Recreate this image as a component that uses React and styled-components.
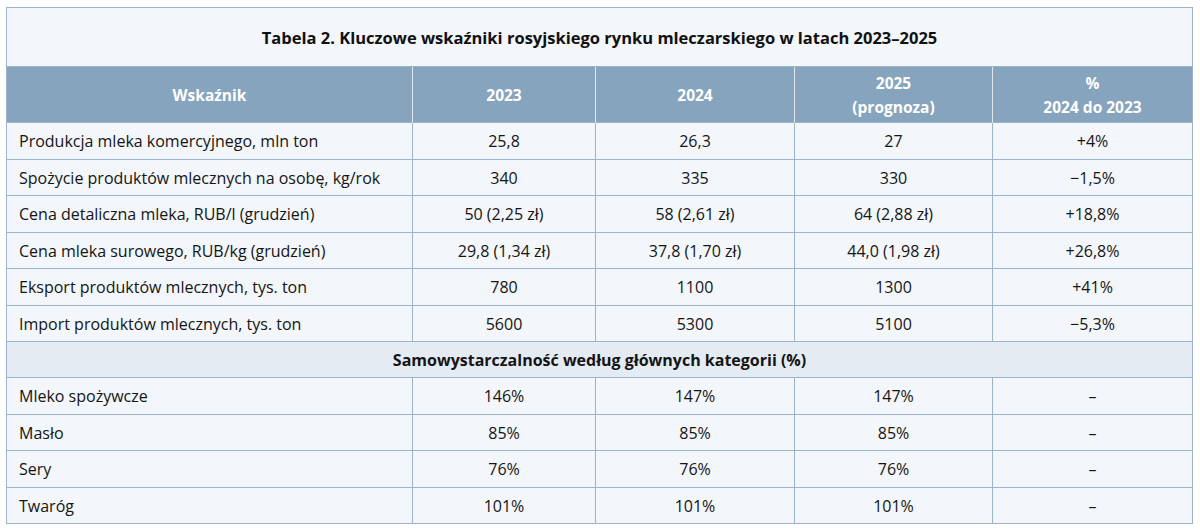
import React from 'react';
import styled, { createGlobalStyle } from 'styled-components';

const GlobalStyle = createGlobalStyle`
  html, body {
    margin: 0;
    background: #ffffff;
  }
  body {
    padding: 7px 0 0 6px;
    font-family: "Open Sans", "Liberation Sans", sans-serif;
    color: #151515;
  }
`;

const Table = styled.table`
  border-collapse: collapse;
  width: 1186px;
  table-layout: fixed;
  background: #f3f6fa;
  border: 1px solid #9bb4cc;
  font-size: 16px;
`;

const TitleCell = styled.th`
  height: 58px;
  padding: 0;
  font-size: 16.5px;
  font-weight: 700;
  color: #111;
  text-align: center;
  background: #f3f6fa;
  border-bottom: 1px solid #9bb4cc;
`;

const HeadRow = styled.tr`
  background: #86a4be;
`;

const HeadCell = styled.th`
  height: 55px;
  padding: 0;
  color: #ffffff;
  font-weight: 700;
  font-size: 15.5px;
  line-height: 24px;
  text-align: center;
  border-left: 1px solid #dfe8f1;
  &:first-child {
    border-left: none;
  }
`;

const Row = styled.tr`
  border-top: 1px solid #9bb4cc;
`;

const Cell = styled.td`
  height: ${({ tall }) => (tall ? 36 : 35)}px;
  padding: 0 ${({ label }) => (label ? '12px' : '0')};
  text-align: ${({ label }) => (label ? 'left' : 'center')};
  border-left: 1px solid #9bb4cc;
  white-space: nowrap;
  &:first-child {
    border-left: none;
  }
`;

const SectionCell = styled.td`
  height: 35px;
  padding: 0;
  text-align: center;
  font-weight: 700;
  background: #e5ebf2;
`;

const data = [
  ['Produkcja mleka komercyjnego, mln ton', '25,8', '26,3', '27', '+4%'],
  ['Spożycie produktów mlecznych na osobę, kg/rok', '340', '335', '330', '\u22121,5%'],
  ['Cena detaliczna mleka, RUB/l (grudzień)', '50 (2,25 zł)', '58 (2,61 zł)', '64 (2,88 zł)', '+18,8%'],
  ['Cena mleka surowego, RUB/kg (grudzień)', '29,8 (1,34 zł)', '37,8 (1,70 zł)', '44,0 (1,98 zł)', '+26,8%'],
  ['Eksport produktów mlecznych, tys. ton', '780', '1100', '1300', '+41%'],
  ['Import produktów mlecznych, tys. ton', '5600', '5300', '5100', '\u22125,3%'],
];

const selfSufficiency = [
  ['Mleko spożywcze', '146%', '147%', '147%', '–'],
  ['Masło', '85%', '85%', '85%', '–'],
  ['Sery', '76%', '76%', '76%', '–'],
  ['Twaróg', '101%', '101%', '101%', '–'],
];

const DataRow = ({ cells, tall }) => (
  <Row>
    {cells.map((c, i) => (
      <Cell key={i} label={i === 0 ? 1 : 0} tall={tall ? 1 : 0}>
        {c}
      </Cell>
    ))}
  </Row>
);

export default function App() {
  return (
    <>
      <GlobalStyle />
      <Table>
        <colgroup>
          <col style={{ width: 406 }} />
          <col style={{ width: 183 }} />
          <col style={{ width: 199 }} />
          <col style={{ width: 198 }} />
          <col style={{ width: 200 }} />
        </colgroup>
        <thead>
          <tr>
            <TitleCell colSpan={5}>
              Tabela 2. Kluczowe wskaźniki rosyjskiego rynku mleczarskiego w latach 2023–2025
            </TitleCell>
          </tr>
          <HeadRow>
            <HeadCell>Wskaźnik</HeadCell>
            <HeadCell>2023</HeadCell>
            <HeadCell>2024</HeadCell>
            <HeadCell>
              2025
              <br />
              (prognoza)
            </HeadCell>
            <HeadCell>
              %
              <br />
              2024 do 2023
            </HeadCell>
          </HeadRow>
        </thead>
        <tbody>
          {data.map((r, i) => (
            <DataRow key={i} cells={r} tall={i % 2 === 0} />
          ))}
          <Row>
            <SectionCell colSpan={5}>Samowystarczalność według głównych kategorii (%)</SectionCell>
          </Row>
          {selfSufficiency.map((r, i) => (
            <DataRow key={i} cells={r} tall={i % 2 === 0} />
          ))}
        </tbody>
      </Table>
    </>
  );
}
